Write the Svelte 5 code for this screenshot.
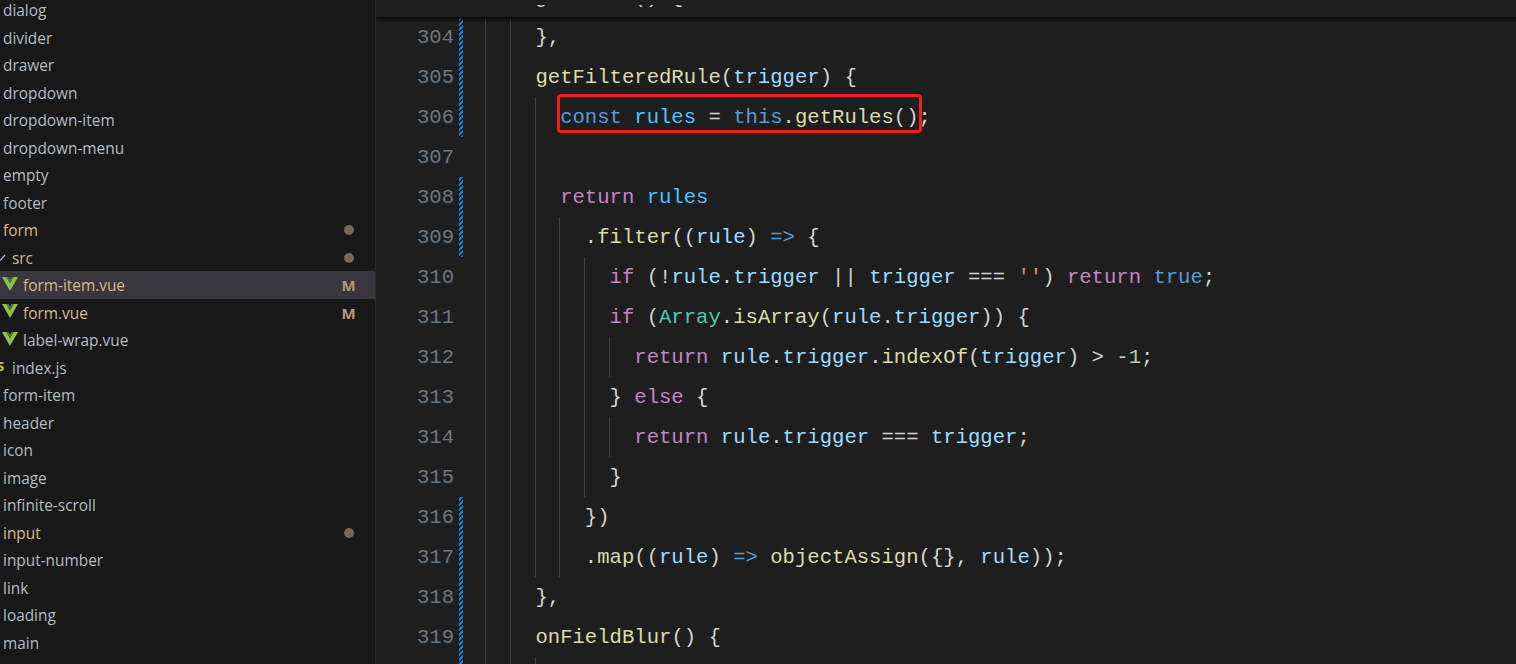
<script>
  // explorer rows: c = git colour class, badge = right-hand decoration
  const files = [
    { name: 'dialog' }, { name: 'divider' }, { name: 'drawer' }, { name: 'dropdown' },
    { name: 'dropdown-item' }, { name: 'dropdown-menu' }, { name: 'empty' }, { name: 'footer' },
    { name: 'form', c: 'mod', badge: 'dot' },
    { name: 'src', c: 'mod', badge: 'dot', pad: 'sub', chevron: true },
    { name: 'form-item.vue', c: 'mod', badge: 'M', pad: 'deep', icon: 'vue', active: true },
    { name: 'form.vue', c: 'mod', badge: 'M', pad: 'deep', icon: 'vue' },
    { name: 'label-wrap.vue', pad: 'deep', icon: 'vue' },
    { name: 'index.js', pad: 'sub', icon: 'js' },
    { name: 'form-item' }, { name: 'header' }, { name: 'icon' }, { name: 'image' },
    { name: 'infinite-scroll' },
    { name: 'input', c: 'mod', badge: 'dot' },
    { name: 'input-number' }, { name: 'link' }, { name: 'loading' }, { name: 'main' }
  ];

  // token classes: k keyword, s storage blue, v variable, c constant, f function, t type, p punctuation
  const lines = [
    { n: 304, g: 2, mod: 1, code: [['p', '},']] },
    { n: 305, g: 2, mod: 1, code: [['f', 'getFilteredRule'], ['p', '('], ['v', 'trigger'], ['p', ') {']] },
    { n: 306, g: 3, mod: 1, box: true, code: [['s', 'const'], ['p', ' '], ['c', 'rules'], ['p', ' = '], ['s', 'this'], ['p', '.'], ['f', 'getRules'], ['p', '();']] },
    { n: 307, g: 3, code: [] },
    { n: 308, g: 3, mod: 1, code: [['k', 'return'], ['p', ' '], ['c', 'rules']] },
    { n: 309, g: 4, mod: 1, code: [['p', '.'], ['f', 'filter'], ['p', '(('], ['v', 'rule'], ['p', ') '], ['s', '=>'], ['p', ' {']] },
    { n: 310, g: 5, code: [['k', 'if'], ['p', ' (!'], ['v', 'rule'], ['p', '.'], ['v', 'trigger'], ['p', ' || '], ['v', 'trigger'], ['p', ' === '], ['o', "''"], ['p', ') '], ['k', 'return'], ['p', ' '], ['s', 'true'], ['p', ';']] },
    { n: 311, g: 5, code: [['k', 'if'], ['p', ' ('], ['t', 'Array'], ['p', '.'], ['f', 'isArray'], ['p', '('], ['v', 'rule'], ['p', '.'], ['v', 'trigger'], ['p', ')) {']] },
    { n: 312, g: 6, code: [['k', 'return'], ['p', ' '], ['v', 'rule'], ['p', '.'], ['v', 'trigger'], ['p', '.'], ['f', 'indexOf'], ['p', '('], ['v', 'trigger'], ['p', ') > -'], ['n', '1'], ['p', ';']] },
    { n: 313, g: 5, code: [['p', '} '], ['k', 'else'], ['p', ' {']] },
    { n: 314, g: 6, code: [['k', 'return'], ['p', ' '], ['v', 'rule'], ['p', '.'], ['v', 'trigger'], ['p', ' === '], ['v', 'trigger'], ['p', ';']] },
    { n: 315, g: 5, code: [['p', '}']] },
    { n: 316, g: 4, mod: 1, code: [['p', '})']] },
    { n: 317, g: 4, mod: 1, code: [['p', '.'], ['f', 'map'], ['p', '(('], ['v', 'rule'], ['p', ') '], ['s', '=>'], ['p', ' '], ['f', 'objectAssign'], ['p', '({}, '], ['v', 'rule'], ['p', '));']] },
    { n: 318, g: 2, mod: 1, code: [['p', '},']] },
    { n: 319, g: 2, mod: 1, code: [['f', 'onFieldBlur'], ['p', '() {']] },
    { n: 320, g: 3, mod: 1, code: [] }
  ];
</script>

<div class="window">
  <aside class="explorer">
    {#each files as f}
      <div class="row {f.pad ?? ''}" class:active={f.active}>
        {#if f.chevron}
          <svg class="chev" width="8" height="8" viewBox="0 0 8 8"><path d="M0 7.5 L5 2" stroke="#b8b8b8" stroke-width="1.2" fill="none" /></svg>
        {/if}
        {#if f.icon === 'vue'}
          <svg class="vue" width="16" height="14" viewBox="0 0 16 14">
            <path d="M0 0 H4.4 L8 6.2 L11.6 0 H16 L8 14 Z" fill="#8dc149" />
            <path d="M4.4 0 H6.5 L8 2.6 L9.5 0 H11.6 L8 6.2 Z" fill="#4f7530" />
          </svg>
        {:else if f.icon === 'js'}
          <span class="js">S</span>
        {/if}
        <span class="name" class:mod={f.c === 'mod'}>{f.name}</span>
        {#if f.badge === 'dot'}
          <i class="dot"></i>
        {:else if f.badge}
          <b class="badge">{f.badge}</b>
        {/if}
      </div>
    {/each}
  </aside>

  <main class="editor">
    <!-- pinned line: only the descenders show below the clipped top -->
    <div class="sticky">
      <div class="sticky-clip">
        <span class="sticky-code"><span class="f">getRules</span><span class="p">() {'{'}</span></span>
      </div>
    </div>
    <div class="lines">
      {#each lines as l}
        <div class="line">
          <span class="num">{l.n}</span>
          <span class="bar" class:on={l.mod}></span>
          <span class="guides">
            {#each Array(l.g) as _}<i class="guide"></i>{/each}
          </span>
          <span class="code">
            {#each l.code as [cls, text]}<span class={cls}>{text}</span>{/each}
            {#if l.box}<span class="redbox"></span>{/if}
          </span>
        </div>
      {/each}
    </div>
  </main>
</div>

<style>
  :global(body) {
    margin: 0;
    background: #1e1e1e;
  }
  .window {
    display: flex;
    width: 1516px;
    height: 664px;
    overflow: hidden;
  }

  /* ── explorer ── */
  .explorer {
    width: 375px;
    flex: none;
    height: 664px;
    overflow: hidden;
    background: #181818;
    border-right: 1px solid #2a2a2a;
    font-family: "Open Sans", "Noto Sans", sans-serif;
    font-size: 15.4px;
    color: #b4bcc4;
  }
  .row {
    display: flex;
    align-items: center;
    height: 27.5px;
    padding-left: 3px;
    position: relative;
    top: -3.6px;
  }
  .row.sub { padding-left: 12px; }
  .row.deep { padding-left: 23px; }
  .row.active { background: #37373d; }
  .name {
    white-space: nowrap;
    padding-top: 1.4px; /* keeps baselines on the reference's rounding */
  }
  .name.mod { color: #d7b98a; }
  .chev { position: absolute; left: 0; top: 9px; }
  .vue { position: absolute; left: 1.5px; top: 5.5px; }
  .js {
    position: absolute;
    left: -3px;
    top: 3px;
    color: #cbcb41;
    font-weight: 700;
    font-size: 13px;
  }
  .dot {
    position: absolute;
    left: 344px;
    top: 9px;
    width: 10px;
    height: 10px;
    border-radius: 50%;
    background: #75695a;
  }
  .badge {
    position: absolute;
    left: 341.5px;
    color: #b09a78;
    font-size: 15px;
    font-weight: 700;
  }

  /* ── editor ── */
  .editor {
    flex: 1;
    position: relative;
    height: 664px;
    overflow: hidden;
    background: #1e1e1e;
    font-family: "Liberation Mono", monospace;
    font-size: 20.6px;
  }
  .sticky {
    position: absolute;
    top: 0;
    left: 0;
    right: 0;
    height: 17px;
    background: #1e1e1e;
    box-shadow: 0 1px 4px 1px #000;
    z-index: 2;
  }
  .sticky-clip {
    position: absolute;
    top: 5px;
    left: 0;
    right: 0;
    height: 12px;
    overflow: hidden;
  }
  .sticky-code {
    position: absolute;
    left: 158.7px;
    top: -27px;
    line-height: 40px;
    white-space: pre;
  }
  .lines { padding-top: 17px; }
  .line {
    display: flex;
    height: 40px;
    line-height: 42px;
    white-space: pre;
  }
  .num {
    width: 78px;
    flex: none;
    text-align: right;
    color: #6e7681;
  }
  .bar {
    width: 4px;
    margin-left: 5px;
    flex: none;
  }
  .bar.on {
    background: repeating-linear-gradient(-45deg, #0e80d8 0 2px, #1e1e1e 2px 3.5px);
  }
  .guides {
    display: flex;
    flex: none;
    margin-left: 22.3px;
  }
  .guide {
    width: 24.72px;
    box-sizing: border-box;
    border-left: 1px solid #404040;
  }
  .code {
    position: relative;
    padding-left: 0.7px;
  }
  .redbox {
    position: absolute;
    left: -2.5px;
    top: -3px;
    width: 365.5px;
    height: 39px;
    box-sizing: border-box;
    border: 3.5px solid #f01f17;
    border-radius: 4px;
  }
  .k { color: #c586c0; }
  .s { color: #569cd6; }
  .v { color: #9cdcfe; }
  .c { color: #4fc1ff; }
  .f { color: #dcdcaa; }
  .t { color: #4ec9b0; }
  .n { color: #b5cea8; }
  .o { color: #ce9178; }
  .p { color: #d4d4d4; }
</style>
